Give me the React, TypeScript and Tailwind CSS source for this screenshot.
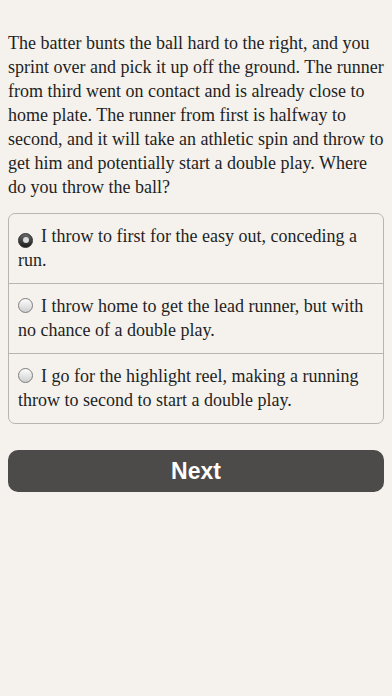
import { useState } from "react";

const options = [
  "I throw to first for the easy out, conceding a run.",
  "I throw home to get the lead runner, but with no chance of a double play.",
  "I go for the highlight reel, making a running throw to second to start a double play.",
];

function Radio({ checked }: { checked: boolean }) {
  if (checked) {
    return (
      <span className="inline-flex w-[15px] h-[15px] rounded-full bg-gradient-to-b from-[#6a6a6a] to-[#1e1e1e] border border-[#2a2a2a] items-center justify-center align-[-1px] mr-[8px]">
        <span className="w-[6px] h-[6px] rounded-full bg-[#dcdcdc]" />
      </span>
    );
  }
  return (
    <span className="inline-block w-[15px] h-[15px] rounded-full bg-gradient-to-b from-[#fdfdfd] to-[#cfcfcf] border border-[#7d7d7d] align-[-1px] mr-[8px]" />
  );
}

export default function App() {
  const [selected, setSelected] = useState(0);

  return (
    <div
      className="w-full min-h-[696px] bg-[#f5f2ee] text-[#1f1f1f] px-2 pt-[31px]"
      style={{ fontFamily: '"Liberation Serif", serif' }}
    >
      <p className="text-[18px] leading-[24px]">
        The batter bunts the ball hard to the right, and you sprint over and
        pick it up off the ground. The runner from third went on contact and is
        already close to home plate. The runner from first is halfway to
        second, and it will take an athletic spin and throw to get him and
        potentially start a double play. Where do you throw the ball?
      </p>

      <div className="mt-[14px] border border-[#b8b5b1] rounded-[7px] bg-[#f5f2ee]">
        {options.map((text, i) => (
          <div
            key={i}
            onClick={() => setSelected(i)}
            className={
              "px-[9px] pt-[10px] pb-[11px] text-[18px] leading-[24px] cursor-pointer " +
              (i > 0 ? "border-t border-[#b8b5b1]" : "")
            }
          >
            <Radio checked={selected === i} />
            {text}
          </div>
        ))}
      </div>

      <button
        className="mt-[26px] w-full h-[42px] rounded-[10px] bg-[#4d4b49] text-white text-[23px] font-bold"
        style={{ fontFamily: '"Liberation Sans", Arial, sans-serif' }}
      >
        Next
      </button>
    </div>
  );
}
